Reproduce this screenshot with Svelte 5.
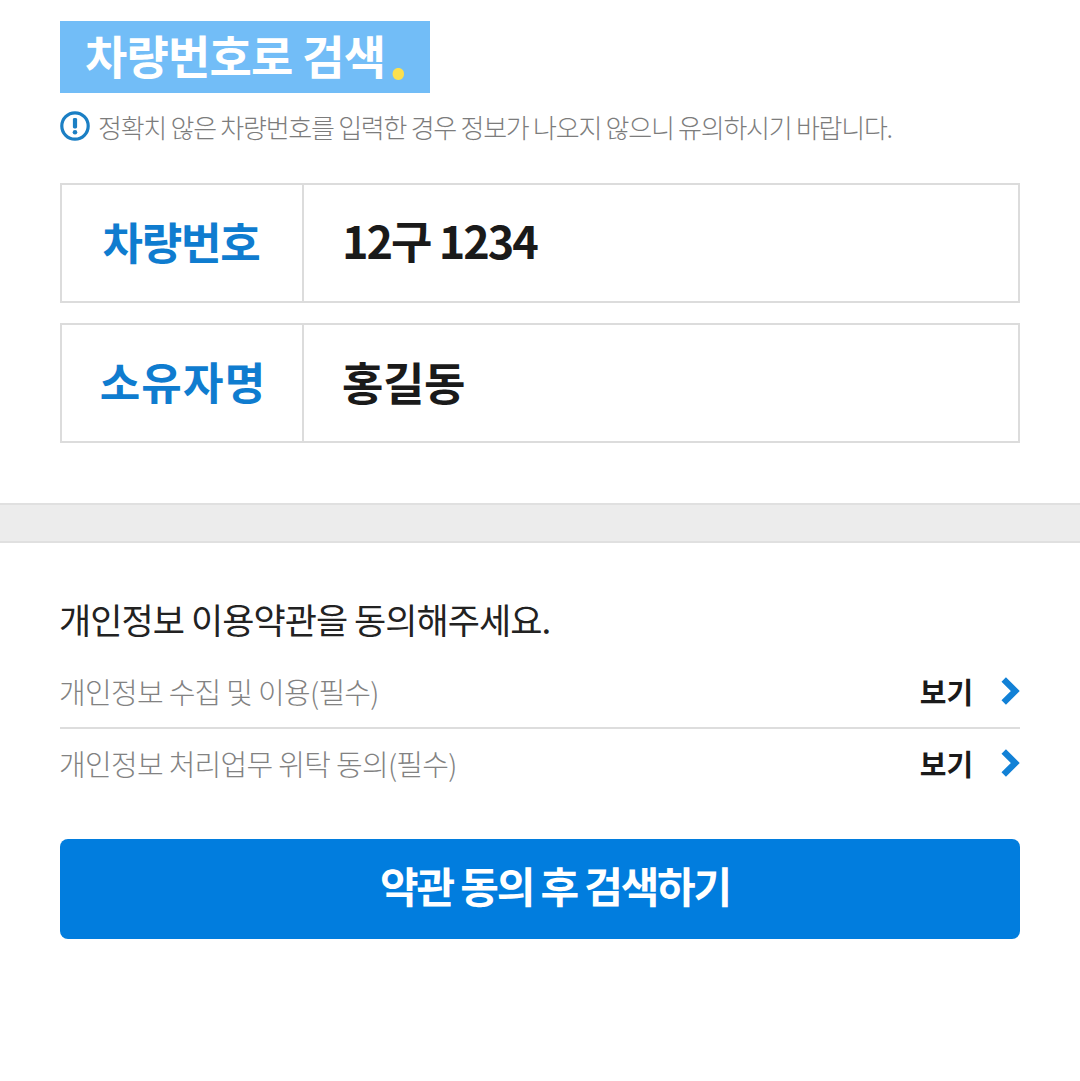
<script>
  const fields = [
    { label: '차량번호', value: '12구 1234' },
    { label: '소유자명', value: '홍길동' }
  ];
  const terms = ['개인정보 수집 및 이용(필수)', '개인정보 처리업무 위탁 동의(필수)'];
</script>

<main class="page">
  <section class="search">
    <h1 class="title">차량번호로 검색<span class="dot">.</span></h1>
    <p class="notice">
      <svg class="info" viewBox="0 0 30 30" aria-hidden="true">
        <circle cx="15" cy="15" r="13.2" fill="none" stroke="#1b7fc4" stroke-width="3.2" />
        <rect x="12.9" y="7" width="4.2" height="10.5" rx="1.4" fill="#1b7fc4" />
        <circle cx="15" cy="21.2" r="2.3" fill="#1b7fc4" />
      </svg>
      <span>정확치 않은 차량번호를 입력한 경우 정보가 나오지 않으니 유의하시기 바랍니다.</span>
    </p>
    <div class="fields">
      {#each fields as f}
        <div class="field">
          <div class="label">{f.label}</div>
          <div class="value">{f.value}</div>
        </div>
      {/each}
    </div>
  </section>
  <div class="divider"></div>
  <section class="terms">
    <h2 class="terms-title">개인정보 이용약관을 동의해주세요.</h2>
    <ul class="term-list">
      {#each terms as t}
        <li class="term">
          <span class="term-name">{t}</span>
          <span class="view">보기</span>
          <svg class="chev" viewBox="0 0 20 28" aria-hidden="true">
            <path d="M4.5 3 L15.5 14 L4.5 25" fill="none" stroke="#1281d6" stroke-width="6" />
          </svg>
        </li>
      {/each}
    </ul>
    <button class="cta">약관 동의 후 검색하기</button>
  </section>
</main>

<style>
  :global(body) {
    margin: 0;
    background: #fff;
  }
  .page {
    font-family: "Noto Sans CJK KR", "Noto Sans", sans-serif;
    height: 1081px;
    overflow: hidden;
    background: #fff;
  }
  .search {
    padding: 21px 60px 0;
  }
  .title {
    display: block;
    width: 370px;
    height: 72px;
    margin: 0;
    padding: 0 0 0 25px;
    box-sizing: border-box;
    background: #72bdf7;
    color: #fff;
    font-size: 46px;
    font-weight: 700;
    line-height: 66px;
    letter-spacing: -0.8px;
    white-space: nowrap;
  }
  .dot {
    display: inline-block;
    height: 24px;
    color: #fbe04f;
    font-size: 62px;
    line-height: 24px;
    margin-left: 3px;
    vertical-align: -5px;
  }
  .notice {
    display: flex;
    align-items: center;
    gap: 8px;
    margin: 18px 0 0;
    height: 30px;
    color: #7c7c7c;
    font-size: 26px;
    font-weight: 300;
    letter-spacing: -1.25px;
    white-space: nowrap;
  }
  .info {
    width: 30px;
    height: 30px;
    flex: none;
  }
  .fields {
    display: flex;
    flex-direction: column;
    gap: 20px;
    margin-top: 42px;
  }
  .field {
    display: flex;
    height: 120px;
    box-sizing: border-box;
    border: 2px solid #dcdcdc;
  }
  .label {
    width: 242px;
    flex: none;
    box-sizing: border-box;
    border-right: 2px solid #dcdcdc;
    display: flex;
    align-items: center;
    justify-content: center;
    padding: 0 2px 4px 0;
    color: #0f7ccf;
    font-size: 44px;
    font-weight: 700;
    letter-spacing: -1.2px;
  }
  .field:last-child .label {
    padding: 0 0 4px 2px;
    letter-spacing: 1.2px;
  }
  .value {
    display: flex;
    align-items: center;
    padding: 0 0 8px 38px;
    color: #1a1a1a;
    font-size: 45px;
    font-weight: 700;
    letter-spacing: -2px;
  }
  .field:last-child .value {
    padding-bottom: 4px;
    letter-spacing: -0.4px;
  }
  .divider {
    height: 40px;
    margin-top: 60px;
    box-sizing: border-box;
    background: #ececec;
    border-top: 2px solid #e0e0e0;
    border-bottom: 2px solid #e0e0e0;
  }
  .terms {
    padding: 51px 60px 0;
  }
  .terms-title {
    margin: 0 0 0 -1px;
    height: 50px;
    color: #222;
    font-size: 35px;
    font-weight: 400;
    line-height: 50px;
    letter-spacing: -0.95px;
    white-space: nowrap;
  }
  .term-list {
    list-style: none;
    margin: 0;
    padding: 0;
  }
  .term {
    display: flex;
    align-items: center;
    height: 72px;
    padding-bottom: 4px;
    box-sizing: border-box;
  }
  .term:first-child {
    height: 74px;
    margin-top: 11px;
    padding-bottom: 0;
    border-bottom: 2px solid #dddddd;
  }
  .term-name {
    flex: 1;
    margin-left: -1px;
    color: #828282;
    font-size: 29px;
    font-weight: 300;
    letter-spacing: -0.7px;
    white-space: nowrap;
  }
  .view {
    color: #1a1a1a;
    font-size: 29px;
    font-weight: 700;
    letter-spacing: -0.1px;
    margin-right: 26px;
  }
  .chev {
    width: 21px;
    height: 30px;
    flex: none;
  }
  .cta {
    display: block;
    width: 100%;
    height: 100px;
    margin-top: 38px;
    border: 0;
    border-radius: 8px;
    background: #017dde;
    color: #fff;
    font-family: inherit;
    font-size: 42px;
    font-weight: 700;
    letter-spacing: -2.2px;
    padding: 0 0 10px 30px;
  }
</style>
